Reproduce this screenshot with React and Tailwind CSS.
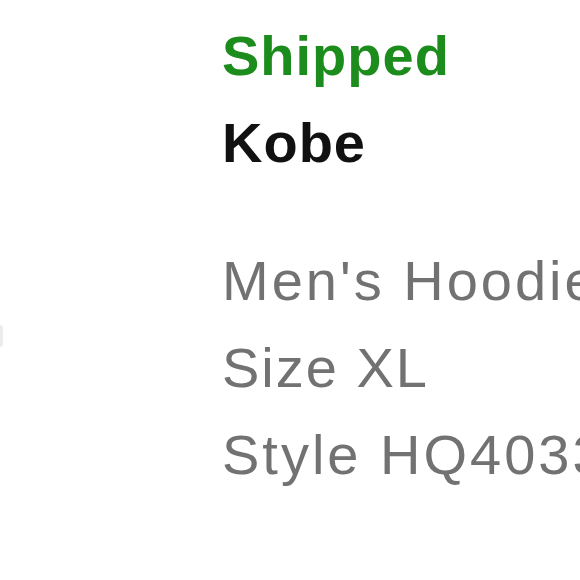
const Line = ({ children, className }) => (
  <p className={`whitespace-nowrap leading-[87px] text-[56px] ${className}`}>
    {children}
  </p>
);

const App = () => {
  return (
    <div
      className="flex w-[580px] h-[580px] overflow-hidden bg-white"
      style={{ fontFamily: '"Liberation Sans", Arial, sans-serif' }}
    >
      <div className="w-[222px] shrink-0 pt-[325px]">
        <div className="w-[3px] h-[22px] rounded-r bg-[#ececec]"></div>
      </div>
      <div className="flex flex-col pt-[12px] min-w-0">
        <Line className="font-bold tracking-[1px] text-[#1c8c1c]">Shipped</Line>
        <Line className="font-bold tracking-[1px] text-[#111111]">Kobe</Line>
        <div className="mt-[51px] text-[#727272]">
          <Line className="tracking-[3px]">Men's Hoodie</Line>
          <Line className="tracking-[2px]">Size XL</Line>
          <Line className="tracking-[3px]">Style HQ4033</Line>
        </div>
      </div>
    </div>
  );
};

export default App;
